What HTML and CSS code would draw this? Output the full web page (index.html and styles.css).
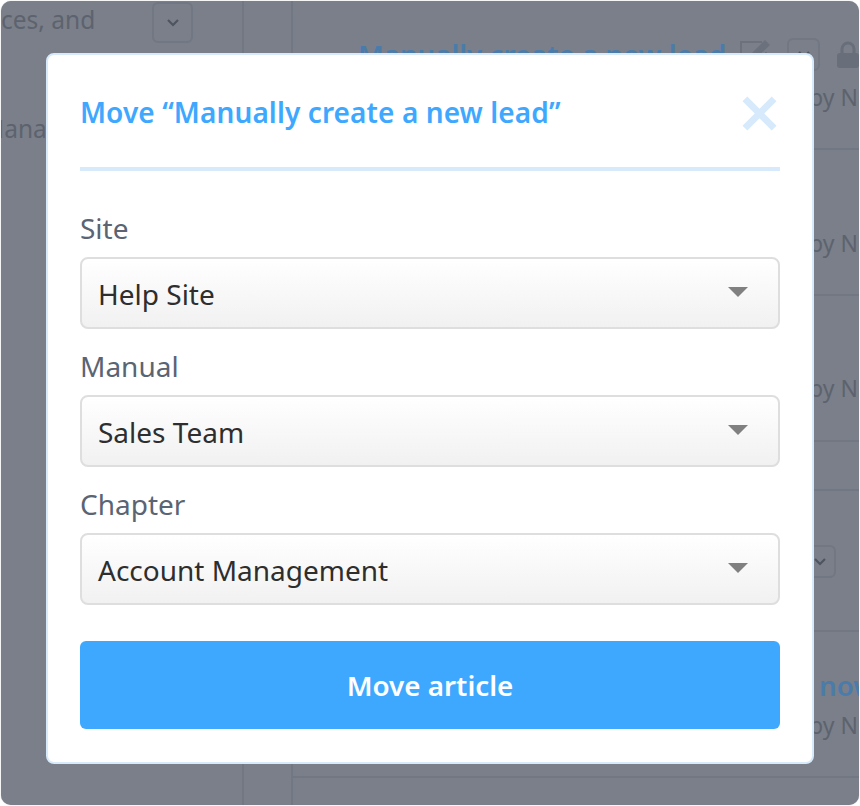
FILE: index.html
```html
<!DOCTYPE html>
<html>
<head>
    <title>Move article</title>
    <link rel="stylesheet" href="styles.css">
</head>
<body>
    <div class="screen">
        <!-- page behind the dialog -->
        <div class="page">
            <div class="sidebar">
                <div class="sidebar-top">
                    <span class="sidebar-text">ces, and</span>
                    <span class="chevron-btn">
                        <svg width="14" height="9" viewBox="0 0 14 9"><path d="M2 2l5 5 5-5" fill="none" stroke="#4f5560" stroke-width="2.2"/></svg>
                    </span>
                </div>
                <div class="sidebar-text sidebar-second">Mana</div>
            </div>
            <div class="gutter"></div>
            <div class="articles">
                <div class="article">
                    <div class="article-head">
                        <span class="article-title">Manually create a new lead</span>
                        <svg class="edit-icon" width="30" height="28" viewBox="0 0 30 28"><path d="M22 2H1v25h25V12" fill="none" stroke="#6b717d" stroke-width="2"/><path d="M11 18l1-5L25 0l5 5-14 13z" fill="#6b717d"/></svg>
                        <span class="chevron-btn small">
                            <svg width="14" height="9" viewBox="0 0 14 9"><path d="M2 2l5 5 5-5" fill="none" stroke="#4f5560" stroke-width="2.2"/></svg>
                        </span>
                        <svg class="lock-icon" width="22" height="28" viewBox="0 0 22 28"><path d="M5 14V9a6 6 0 0 1 12 0v5" fill="none" stroke="#686e7a" stroke-width="3"/><rect x="0" y="13" width="22" height="15" rx="3" fill="#686e7a"/></svg>
                    </div>
                    <div class="article-meta">by Nick</div>
                </div>
                <div class="article"><div class="article-meta">by Nick</div></div>
                <div class="article"><div class="article-meta">by Nick</div></div>
                <div class="article article-short"></div>
                <div class="article article-tools">
                    <span class="chevron-btn small">
                        <svg width="14" height="9" viewBox="0 0 14 9"><path d="M2 2l5 5 5-5" fill="none" stroke="#4f5560" stroke-width="2.2"/></svg>
                    </span>
                </div>
                <div class="article article-last">
                    <div class="article-head article-now"><span class="article-title">now</span></div>
                    <div class="article-meta">by Nick</div>
                </div>
            </div>
        </div>

        <div class="modal">
            <div class="modal-head">
                <h1>Move “Manually create a new lead”</h1>
                <svg class="close-icon" width="35" height="35" viewBox="0 0 36 36"><path d="M3 3l30 30M33 3L3 33" fill="none" stroke="#d6eafb" stroke-width="7"/></svg>
            </div>
            <form class="move-form">
                <label>Site</label>
                <div class="select-box"><span>Help Site</span><i class="caret"></i></div>
                <label>Manual</label>
                <div class="select-box"><span>Sales Team</span><i class="caret"></i></div>
                <label>Chapter</label>
                <div class="select-box"><span>Account Management</span><i class="caret"></i></div>
                <button type="button" class="move-btn">Move article</button>
            </form>
        </div>
    </div>
</body>
</html>
```

FILE: styles.css
```css
* {
    box-sizing: border-box;
}

html, body {
    margin: 0;
    height: 100%;
    background-color: #fff;
}

body {
    font-family: "Noto Sans", "Open Sans", sans-serif;
}

.screen {
    position: relative;
    width: 858px;
    height: 804px;
    margin: 1px;
    background-color: #7a7f89;
    border-radius: 10px;
    box-shadow: 0 0 1px #999;
    overflow: hidden;
}

.page {
    display: flex;
    height: 100%;
}

.sidebar {
    width: 243px;
    border-right: 2px solid #717783;
    overflow: hidden;
    flex-shrink: 0;
}

.sidebar-top {
    display: flex;
    align-items: flex-start;
    height: 42px;
    margin-top: 1px;
}

.sidebar-text {
    font-size: 24.5px;
    line-height: 36px;
    color: #5d636e;
    white-space: nowrap;
}

.sidebar-top .sidebar-text {
    width: 151px;
}

.sidebar-second {
    margin-top: 67px;
    margin-left: -19px;
}

.chevron-btn {
    display: flex;
    align-items: center;
    justify-content: center;
    width: 41px;
    height: 41px;
    border: 2px solid #717783;
    border-radius: 6px;
}

.chevron-btn.small {
    width: 33px;
    height: 33px;
    flex-shrink: 0;
}

.gutter {
    width: 49px;
    border-right: 2px solid #717783;
    flex-shrink: 0;
}

.articles {
    flex: 1;
    min-width: 0;
}

.article {
    height: 146px;
    padding-top: 75px;
    border-bottom: 2px solid #717783;
    overflow: hidden;
}

.article:first-child {
    height: 149px;
    padding-top: 36px;
}

.article:first-child .article-meta {
    margin-top: 8px;
}

.article:nth-child(3) {
    padding-top: 74px;
}

.article-short {
    height: 49px;
    padding: 0;
}

.article-tools {
    height: 141px;
    padding: 54px 0 0 510px;
}

.article-last {
    padding-top: 36px;
}

.article-last .article-meta {
    margin-top: 5px;
}

.article-head {
    display: flex;
    align-items: center;
    height: 34px;
    padding-left: 65px;
}

.article-title {
    font-size: 27.7px;
    font-weight: 600;
    line-height: 34px;
    color: #4a7cab;
    white-space: nowrap;
    width: 382px;
}

.edit-icon {
    margin-right: 17px;
    flex-shrink: 0;
}

.lock-icon {
    margin-left: 17px;
    flex-shrink: 0;
}

.article-meta {
    padding-left: 516px;
    font-size: 23px;
    line-height: 36px;
    color: #5d636e;
    white-space: nowrap;
}

.article-now {
    padding-left: 526px;
}

.modal {
    position: absolute;
    left: 45px;
    top: 52px;
    width: 768px;
    height: 711px;
    padding: 0 32px;
    background-color: #fff;
    border: 2px solid #d6eafb;
    border-radius: 8px;
}

.modal-head {
    display: flex;
    justify-content: space-between;
    align-items: center;
    height: 116px;
    padding-top: 1px;
    border-bottom: 4px solid #d6eafb;
}

.modal-head h1 {
    margin: 0;
    font-size: 28px;
    font-weight: 600;
    letter-spacing: 0.1px;
    color: #3ea8ff;
    white-space: nowrap;
}

.close-icon {
    margin: 4px 3px 0 0;
}

.move-form {
    display: flex;
    flex-direction: column;
}

label {
    margin-top: 15px;
    font-size: 28px;
    line-height: 44px;
    color: #5a6473;
    height: 51px;
}

.move-form label:first-child {
    margin-top: 35px;
}

.select-box {
    display: flex;
    align-items: center;
    justify-content: space-between;
    height: 72px;
    padding: 2px 30px 0 16px;
    font-size: 28px;
    color: #2e2e2e;
    background: linear-gradient(#fff, #f1f1f1);
    border: 2px solid #dedede;
    border-radius: 8px;
}

.caret {
    width: 0;
    height: 0;
    margin-bottom: 5px;
    border-left: 10px solid transparent;
    border-right: 10px solid transparent;
    border-top: 10px solid #808080;
}

.move-btn {
    height: 88px;
    margin-top: 36px;
    font-family: inherit;
    font-size: 27.8px;
    font-weight: 600;
    color: #fff;
    background-color: #3ea8ff;
    border: 0;
    border-radius: 6px;
}
```
